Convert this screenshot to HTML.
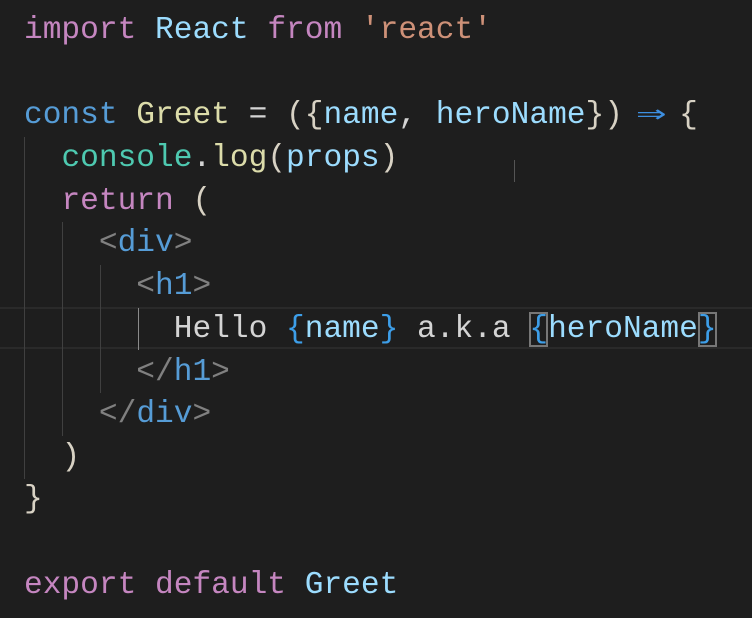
<!DOCTYPE html>
<html><head><style>
html,body{margin:0;padding:0;}
body{width:752px;height:618px;background:#1e1e1e;overflow:hidden;position:relative;font-family:"Liberation Mono",monospace;font-size:31.2px;}
.l{position:absolute;left:24px;height:43px;line-height:43px;white-space:pre;color:#d4d4d4;}
.k{color:#c586c0}.c{color:#569cd6}.v{color:#9cdcfe}.f{color:#dcdcaa}.s{color:#ce9178}.t{color:#4ec9b0}.p{color:#808080}.b{color:#3d9ee8}.w{color:#d8d2c4}
.g{position:absolute;width:1px;background:#404040;}
.hl{position:absolute;left:0;width:752px;top:307px;height:42px;border-top:2px solid #2a2a2a;border-bottom:2px solid #2a2a2a;box-sizing:border-box;}
.bx{outline:2px solid #777;outline-offset:-2px;}
.ar{display:inline-block;width:18.7px;text-align:center;transform:scaleX(1.6);color:#3d8fe0;}
</style></head><body>
<div class="hl"></div>
<div class="g" style="left:24px;top:137px;height:342px"></div>
<div class="g" style="left:62px;top:222px;height:214px"></div>
<div class="g" style="left:100px;top:265px;height:128px"></div>
<div class="g" style="left:138px;top:308px;height:42px;background:#8a8a8a"></div>
<div style="position:absolute;left:514px;top:160px;width:1px;height:22px;background:#555"></div>
<div class="l" style="top:9px"><span class="k">import</span> <span class="v">React</span> <span class="k">from</span> <span class="s">'react'</span></div>
<div class="l" style="top:94px"><span class="c">const</span> <span class="f">Greet</span> = <span class="w">({</span><span class="v">name</span>, <span class="v">heroName</span><span class="w">})</span> <span class="ar">⇒</span> <span class="w">{</span></div>
<div class="l" style="top:137px">  <span class="t">console</span>.<span class="f">log</span><span class="w">(</span><span class="v">props</span><span class="w">)</span></div>
<div class="l" style="top:180px">  <span class="k">return</span> <span class="w">(</span></div>
<div class="l" style="top:222px">    <span class="p">&lt;</span><span class="c">div</span><span class="p">&gt;</span></div>
<div class="l" style="top:265px">      <span class="p">&lt;</span><span class="c">h1</span><span class="p">&gt;</span></div>
<div class="l" style="top:308px">        Hello <span class="b">{</span><span class="v">name</span><span class="b">}</span> a.k.a <span class="b bx">{</span><span class="v">heroName</span><span class="b bx">}</span></div>
<div class="l" style="top:351px">      <span class="p">&lt;/</span><span class="c">h1</span><span class="p">&gt;</span></div>
<div class="l" style="top:393px">    <span class="p">&lt;/</span><span class="c">div</span><span class="p">&gt;</span></div>
<div class="l" style="top:436px">  <span class="w">)</span></div>
<div class="l" style="top:478px"><span class="w">}</span></div>
<div class="l" style="top:564px"><span class="k">export</span> <span class="k">default</span> <span class="v">Greet</span></div>
</body></html>
